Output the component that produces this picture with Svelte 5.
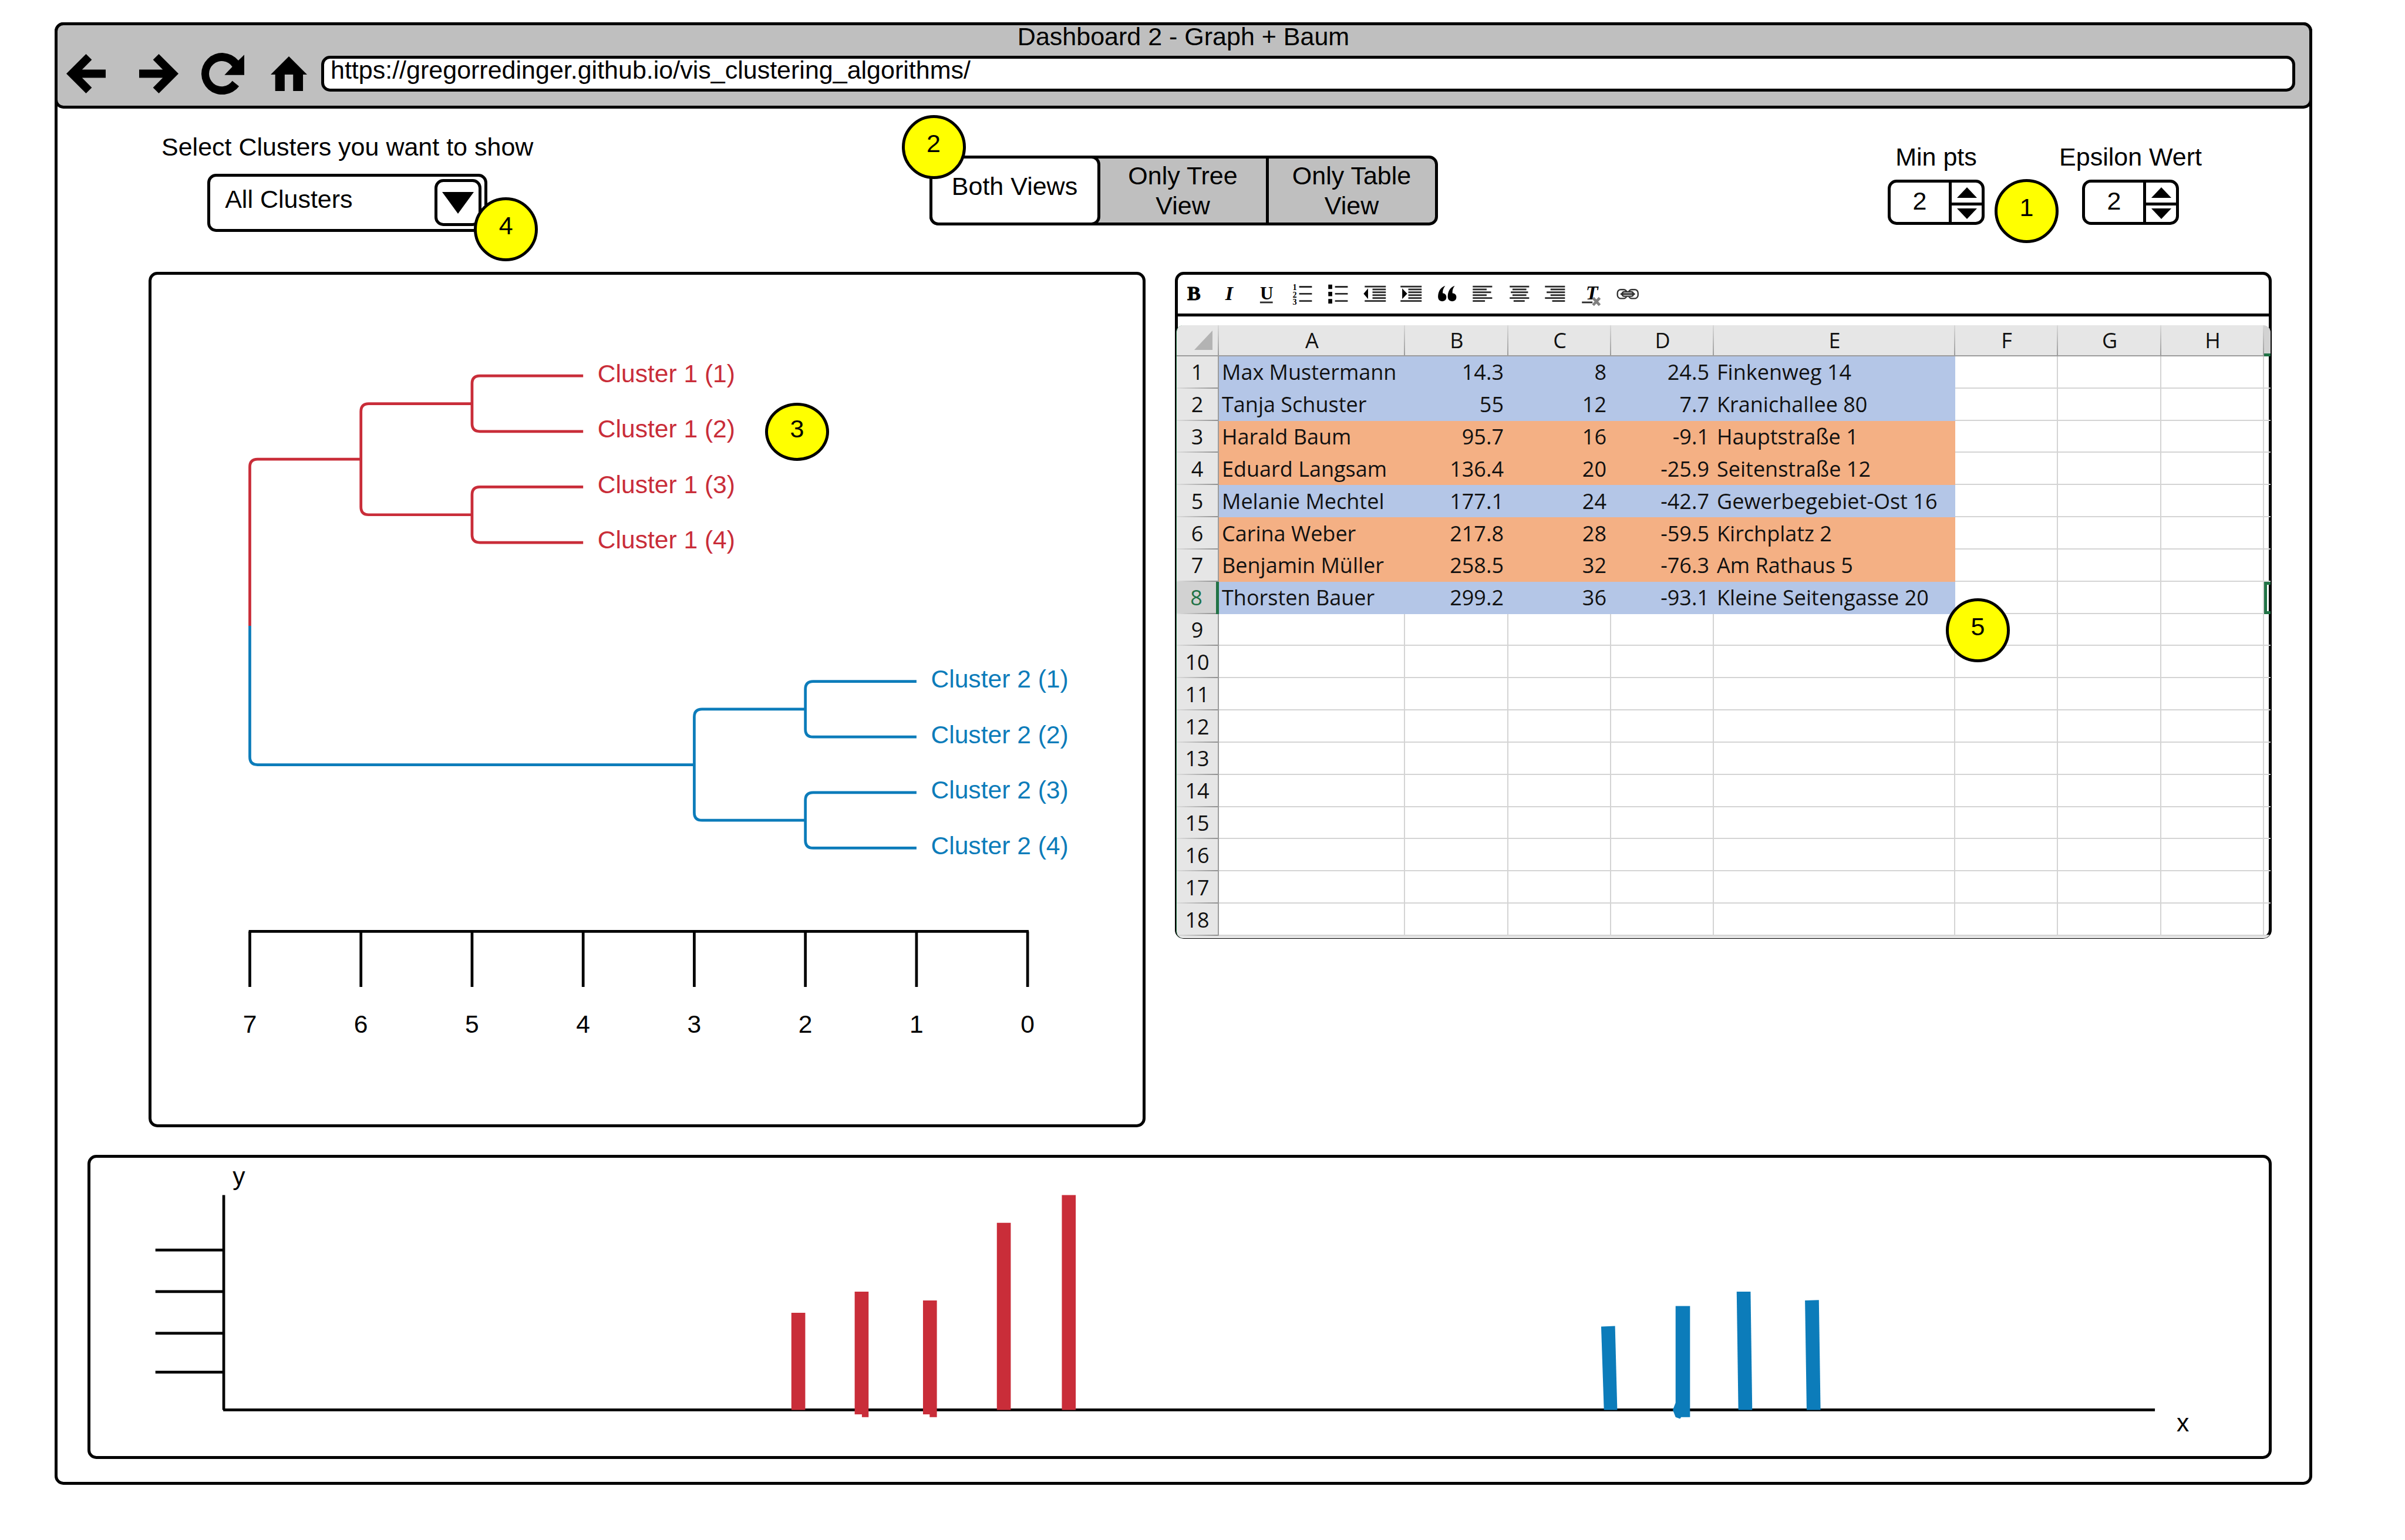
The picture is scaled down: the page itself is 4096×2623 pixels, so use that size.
<script>
  let url = $state('https://gregorredinger.github.io/vis_clustering_algorithms/');
  let selected = $state('All Clusters');
  let view = $state('Both Views');
  let minPts = $state(2);
  let epsilon = $state(2);

  const views = ['Both Views', 'Only Tree View', 'Only Table View'];

  // Dendrogram geometry: one scale unit is 200 wide, leaves are 100 apart.
  const levelX = (level) => 1850 - level * 200;
  const bracket = (level, top, bottom, endTop, endBottom) => {
    const x = levelX(level);
    return `M${endTop} ${top}H${x + 14}Q${x} ${top} ${x} ${top + 14}V${bottom - 14}Q${x} ${bottom} ${x + 14} ${bottom}H${endBottom}`;
  };
  const groups = [
    { name: 'Cluster 1', tone: 'red', top: 677, leafLevel: 5 },
    { name: 'Cluster 2', tone: 'blue', top: 1227, leafLevel: 2 }
  ];
  const ticks = [7, 6, 5, 4, 3, 2, 1, 0];

  const yTicks = [2252, 2327, 2402, 2472];
  const redBars = [
    'M1425 2365h25v175h-25z',
    'M1539 2327h25v226h-12v-5h-13z',
    'M1662 2343h25v210h-13v-5h-12z',
    'M1795 2203h25v337h-25z',
    'M1912 2153h25v387h-25z'
  ];
  const blueBars = [
    'M2883 2390l25-1 4 151h-24z',
    'M3017 2353h26v200h-16l-2 3-8-3-5-13 5-13z',
    'M3127 2327h25l3 213h-25z',
    'M3250 2343l25-1 3 198h-25z'
  ];

  const columns = ['A', 'B', 'C', 'D', 'E', 'F', 'G', 'H'];
  const people = [
    ['Max Mustermann', '14.3', '8', '24.5', 'Finkenweg 14', 'one'],
    ['Tanja Schuster', '55', '12', '7.7', 'Kranichallee 80', 'one'],
    ['Harald Baum', '95.7', '16', '-9.1', 'Hauptstraße 1', 'two'],
    ['Eduard Langsam', '136.4', '20', '-25.9', 'Seitenstraße 12', 'two'],
    ['Melanie Mechtel', '177.1', '24', '-42.7', 'Gewerbegebiet-Ost 16', 'one'],
    ['Carina Weber', '217.8', '28', '-59.5', 'Kirchplatz 2', 'two'],
    ['Benjamin Müller', '258.5', '32', '-76.3', 'Am Rathaus 5', 'two'],
    ['Thorsten Bauer', '299.2', '36', '-93.1', 'Kleine Seitengasse 20', 'one']
  ];
  const emptyRows = [9, 10, 11, 12, 13, 14, 15, 16, 17, 18];
  const lineRows = [8.5, 13.7, 18.8, 24, 29.2, 34.5];
  const tools = ['Bold', 'Italic', 'Underline', 'Numbered list', 'Bulleted list', 'Outdent', 'Indent', 'Quote', 'Align left', 'Align center', 'Align right', 'Clear formatting', 'Link'];
  const alignLines = {
    'Align left': [[14, 49], [14, 39], [14, 47], [14, 39], [14, 49], [14, 36]],
    'Align center': [[15, 50], [20, 45], [17, 48], [20, 45], [15, 50], [22, 42]],
    'Align right': [[14, 50], [24, 50], [17, 50], [24, 50], [14, 50], [27, 50]],
    Outdent: [[14, 52], [28, 52], [28, 52], [28, 52], [28, 52], [14, 52]],
    Indent: [[14, 52], [28, 52], [28, 52], [28, 52], [28, 52], [14, 52]]
  };
</script>

<div class="browser">
  <header class="chrome">
    <h1>Dashboard 2 - Graph + Baum</h1>
    <div class="navigation">
      <button class="nav back" aria-label="Back">
        <svg viewBox="0 0 70 70"><path d="M0 35L35 0 45.3 10.3 28 27.6H70V42.4H28L45.3 59.7 35 70z" /></svg>
      </button>
      <button class="nav forward" aria-label="Forward">
        <svg viewBox="0 0 70 70"><path d="M70 35L35 0 24.7 10.3 42 27.6H0V42.4H42L24.7 59.7 35 70z" /></svg>
      </button>
      <button class="nav reload" aria-label="Reload">
        <svg viewBox="0 0 77 75"><path d="M55.5 25A22.8 22.8 0 1 0 55.5 50.3L67.6 60A37.5 37.5 0 1 1 66.4 13.7L77 3.3V39.7H41.5z" /></svg>
      </button>
      <button class="nav home" aria-label="Home">
        <svg viewBox="0 0 66 63"><path d="M33 0L66 33H58.6V63H40.7V33H25.4V63H8.2V33H0z" /></svg>
      </button>
      <input class="url" type="text" aria-label="Address" bind:value={url} />
    </div>
  </header>

  <main>
    <div class="controls">
      <div class="cluster-field">
        <label for="clusters">Select Clusters you want to show</label>
        <div class="dropdown">
          <select id="clusters" bind:value={selected}>
            <option>All Clusters</option>
            <option>Cluster 1</option>
            <option>Cluster 2</option>
          </select>
          <span class="arrow"><svg viewBox="0 0 54 37"><path d="M0 0H54L27 37z" /></svg></span>
          <span class="badge on-dropdown">4</span>
        </div>
      </div>

      <div class="toggle" role="group" aria-label="View">
        {#each views as name}
          <button class="segment" class:active={view === name} onclick={() => (view = name)}>{name}</button>
        {/each}
        <span class="badge on-toggle">2</span>
      </div>

      <div class="numbers">
        <div class="number-field">
          <label for="min-pts">Min pts</label>
          <div class="spinner">
            <input id="min-pts" type="number" bind:value={minPts} />
            <div class="steps">
              <button aria-label="Increase Min pts" onclick={() => (minPts += 1)}><svg viewBox="0 0 34 18"><path d="M0 18H34L17 0z" /></svg></button>
              <button aria-label="Decrease Min pts" onclick={() => (minPts -= 1)}><svg viewBox="0 0 34 18"><path d="M0 0H34L17 18z" /></svg></button>
            </div>
            <span class="badge on-spinner">1</span>
          </div>
        </div>
        <div class="number-field">
          <label for="epsilon">Epsilon Wert</label>
          <div class="spinner">
            <input id="epsilon" type="number" bind:value={epsilon} />
            <div class="steps">
              <button aria-label="Increase Epsilon Wert" onclick={() => (epsilon += 1)}><svg viewBox="0 0 34 18"><path d="M0 18H34L17 0z" /></svg></button>
              <button aria-label="Decrease Epsilon Wert" onclick={() => (epsilon -= 1)}><svg viewBox="0 0 34 18"><path d="M0 0H34L17 18z" /></svg></button>
            </div>
          </div>
        </div>
      </div>
    </div>

    <div class="panels">
      <section class="panel tree" aria-label="Dendrogram">
        <svg class="drawing" viewBox="273 495 1784 1529">
          <path class="line red" d="M450 1127V841Q450 827 464 827H650" />
          <path class="line blue" d="M450 1127V1363Q450 1377 464 1377H1250" />
          {#each groups as group}
            {@const leafX = levelX(group.leafLevel)}
            <path class="line {group.tone}" d={bracket(group.leafLevel + 1, group.top + 50, group.top + 250, leafX, leafX)} />
            <path class="line {group.tone}" d={bracket(group.leafLevel, group.top, group.top + 100, leafX + 200, leafX + 200)} />
            <path class="line {group.tone}" d={bracket(group.leafLevel, group.top + 200, group.top + 300, leafX + 200, leafX + 200)} />
            {#each [1, 2, 3, 4] as n}
              <text class="label {group.tone}" x={leafX + 226} y={group.top + n * 100 - 89}>{group.name} ({n})</text>
            {/each}
          {/each}
          <path class="line black" d="M448 1677H1852" />
          {#each ticks as tick}
            <path class="line black" d="M{levelX(tick)} 1677V1777" />
            <text class="label centered" x={levelX(tick)} y="1859">{tick}</text>
          {/each}
        </svg>
        <span class="badge on-tree">3</span>
      </section>

      <section class="panel sheet" aria-label="Data table">
        <div class="toolbar">
          <div class="tools">
            {#each tools as tool}
              <button aria-label={tool}>
                <svg viewBox="0 0 65 45">
                  {#if tool === 'Bold'}
                    <text class="glyph heavy" x="32" y="33">B</text>
                  {:else if tool === 'Italic'}
                    <text class="glyph italic" x="30" y="33">I</text>
                  {:else if tool === 'Underline'}
                    <text class="glyph underlined" x="33" y="32">U</text>
                    <path class="rule" d="M21 37H44" />
                  {:else if tool === 'Numbered list'}
                    <text class="digit" x="18" y="15">1</text>
                    <text class="digit" x="18" y="28">2</text>
                    <text class="digit" x="18" y="41">3</text>
                    <path class="rule" d="M26 9H49M26 21.5H49M26 34.5H49" />
                  {:else if tool === 'Bulleted list'}
                    <path d="M14 5h7v8h-7zM14 18h7v8h-7zM14 31h7v8h-7z" />
                    <path class="rule" d="M26 9H49M26 21.5H49M26 34.5H49" />
                  {:else if tool === 'Quote'}
                    <path d="M29 7C20 10 16 18 16 27C16 32 19 35 23.500 35C28 35 31 32 31 27.500C31 23 28 20.500 24.500 20.500C24 15 26 11 29 7zM46 7C37 10 33.500 18 33.500 27C33.500 32 37 35 41.500 35C46 35 49 32 49 27.500C49 23 46 20.500 42 20.500C41.500 15 43 11 46 7z" />
                  {:else if tool === 'Clear formatting'}
                    <text class="glyph italic" x="33" y="32">T</text>
                    <path class="rule" d="M15 37H34" />
                    <path class="cross" d="M35 29L47 42M47 29L35 42" />
                  {:else if tool === 'Link'}
                    <rect class="chain" x="14.500" y="14" width="17" height="16" rx="6" />
                    <rect class="chain" x="34.500" y="14" width="17" height="16" rx="6" />
                    <rect class="gap" x="26" y="17" width="14" height="10" />
                    <path class="chain" d="M27 18H39Q43 18 43 22Q43 26 39 26H27Q23 26 23 22Q23 18 27 18z" />
                    <path class="rule" d="M20 22H46" />
                  {:else}
                    {#if tool === 'Outdent'}<path d="M12 21.500L20 12V31z" />{/if}
                    {#if tool === 'Indent'}<path d="M26 21.500L17 12V31z" />{/if}
                    {#each alignLines[tool] as [from, to], i}
                      <path class="rule" d="M{from} {lineRows[i]}H{to}" />
                    {/each}
                  {/if}
                </svg>
              </button>
            {/each}
          </div>
        </div>
        <div class="grid-clip">
          <table>
            <colgroup>
              <col class="c-index" /><col class="c-name" /><col class="c-odd" /><col class="c-std" /><col class="c-std" />
              <col /><col class="c-std" /><col class="c-odd" /><col class="c-std" /><col class="c-rest" />
            </colgroup>
            <thead>
              <tr>
                <th class="corner" aria-label="Select all"><svg viewBox="0 0 31 33"><path d="M31 0V33H0z" /></svg></th>
                {#each columns as column}<th scope="col">{column}</th>{/each}
                <th class="current" aria-label="I"></th>
              </tr>
            </thead>
            <tbody>
              {#each people as [name, b, c, d, street, tone], i}
                <tr class={tone}>
                  <th scope="row" class:chosen={i === 7}>{i + 1}</th>
                  <td class="filled">{name}</td>
                  <td class="filled figure">{b}</td>
                  <td class="filled figure">{c}</td>
                  <td class="filled figure">{d}</td>
                  <td class="filled">{street}</td>
                  <td></td><td></td><td></td>
                  <td class:cursor={i === 7}></td>
                </tr>
              {/each}
              {#each emptyRows as n}
                <tr>
                  <th scope="row">{n}</th>
                  <td></td><td></td><td></td><td></td><td></td><td></td><td></td><td></td><td></td>
                </tr>
              {/each}
            </tbody>
          </table>
        </div>
        <span class="badge on-sheet">5</span>
      </section>
    </div>

    <section class="panel chart" aria-label="Bar chart">
      <svg class="drawing" viewBox="163 2086 3922 537">
        <path class="line black" d="M403 2153V2540M402 2540H3880" />
        {#each yTicks as y}<path class="line black" d="M280 {y}H403" />{/each}
        {#each redBars as d}<path class="fill-red" {d} />{/each}
        {#each blueBars as d}<path class="fill-blue" {d} />{/each}
        <text class="label" x="419" y="2135">y</text>
        <text class="label" x="3919" y="2579">x</text>
      </svg>
    </section>
  </main>
</div>

<style>
  :global(body) {
    margin: 0;
    background: #fff;
  }

  .browser {
    margin: 38px 158px 93px 93px;
    border: 5px solid #000;
    border-radius: 15px;
    font: 43px/51px "Liberation Sans", Arial, sans-serif;
    color: #000;
  }

  button,
  input,
  select {
    box-sizing: border-box;
    margin: 0;
    padding: 0;
    border: 0;
    background: none;
    font: inherit;
    color: inherit;
  }

  svg {
    display: block;
  }

  .chrome {
    margin: -5px -5px 0;
    padding: 0 24px 24px 15px;
    border: 5px solid #000;
    border-radius: 15px;
    background: #bfbfbf;
  }

  h1 {
    margin: 0 0 13px;
    padding-left: 9px;
    font: inherit;
    line-height: 39px;
    text-align: center;
  }

  .navigation {
    display: flex;
    align-items: center;
    height: 61px;
  }

  .nav svg {
    width: 100%;
  }

  .back,
  .forward {
    width: 67px;
  }

  .forward {
    margin-left: 57px;
  }

  .reload {
    width: 73px;
    margin-left: 39px;
  }

  .home {
    width: 62px;
    margin: 0 24px 0 45px;
  }

  .url {
    flex: 1;
    height: 61px;
    padding: 0 11px 13px;
    border: 5px solid #000;
    border-radius: 15px;
    background: #fff;
  }

  main {
    padding: 40px 64px 39px 51px;
  }

  .controls {
    display: grid;
    grid-template-columns: 1fr auto 1fr;
    align-items: start;
    margin: 0 -64px 0 -51px;
  }

  .cluster-field {
    display: flex;
    flex-direction: column;
    align-items: center;
    gap: 20px;
    justify-self: start;
    margin-left: 177px;
  }

  .dropdown {
    position: relative;
    width: 477px;
    height: 99px;
  }

  select {
    appearance: none;
    width: 100%;
    height: 100%;
    padding: 0 100px 12px 25px;
    border: 5px solid #000;
    border-radius: 15px;
    background: #fff;
  }

  .arrow {
    position: absolute;
    top: 9px;
    right: 10px;
    display: grid;
    place-items: center;
    box-sizing: border-box;
    width: 80px;
    height: 80px;
    border: 5px solid #000;
    border-radius: 15px;
    pointer-events: none;
  }

  .arrow svg {
    width: 54px;
  }

  .badge {
    position: absolute;
    display: grid;
    place-items: center;
    box-sizing: border-box;
    width: 109px;
    height: 109px;
    padding-bottom: 12px;
    border: 5px solid #000;
    border-radius: 50%;
    background: #ff0;
  }

  .on-dropdown {
    left: 454px;
    top: 40px;
  }

  .on-toggle {
    left: -52px;
    top: -74px;
  }

  .on-spinner {
    left: 177px;
    top: -6px;
  }

  .on-tree {
    left: 1045px;
    top: 218px;
    height: 99px;
    padding-bottom: 10px;
  }

  .on-sheet {
    left: 1308px;
    top: 551px;
  }

  .toggle {
    position: relative;
    display: grid;
    grid-template-columns: 286fr 282fr 288fr;
    box-sizing: border-box;
    width: 866px;
    height: 119px;
    margin-top: 40px;
    border: 5px solid #000;
    border-radius: 15px;
    background: #bfbfbf;
  }

  .segment {
    padding: 0 30px;
  }

  .segment + .segment:not(.active) + .segment:not(.active) {
    border-left: 5px solid #000;
  }

  .segment.active {
    margin: -5px 0 -5px -5px;
    padding-bottom: 14px;
    border: 5px solid #000;
    border-radius: 15px;
    background: #fff;
  }

  .numbers {
    display: flex;
    gap: 127px;
    justify-self: end;
    margin: 17px 183px 0 0;
  }

  .number-field {
    display: flex;
    flex-direction: column;
    align-items: center;
    gap: 13px;
  }

  .spinner {
    position: relative;
    display: flex;
    box-sizing: border-box;
    width: 165px;
    height: 77px;
    border: 5px solid #000;
    border-radius: 15px;
  }

  .spinner input {
    appearance: textfield;
    width: 99px;
    padding-bottom: 5px;
    text-align: center;
  }

  .spinner input::-webkit-inner-spin-button {
    display: none;
  }

  .steps {
    display: grid;
    flex: 1;
    grid-template-rows: 1fr 1fr;
    border-left: 5px solid #000;
  }

  .steps button {
    display: grid;
    place-items: center;
    line-height: 0;
  }

  .steps button + button {
    border-top: 5px solid #000;
  }

  .steps svg {
    width: 34px;
  }

  .panels {
    display: grid;
    grid-template-columns: 1698fr 1868fr;
    gap: 50px;
    align-items: start;
    margin: 68px 0 47px 104px;
  }

  .panel {
    position: relative;
    border: 5px solid #000;
    border-radius: 15px;
  }

  .drawing {
    width: 100%;
  }

  .line {
    fill: none;
    stroke-width: 5;
  }

  .line.red {
    stroke: #c92d39;
  }

  .line.blue {
    stroke: #0c7cba;
  }

  .line.black {
    stroke: #000;
  }

  .label {
    font-size: 45px;
  }

  .label.red,
  .fill-red {
    fill: #c92d39;
  }

  .label.blue,
  .fill-blue {
    fill: #0c7cba;
  }

  .centered {
    text-anchor: middle;
  }

  .toolbar {
    margin: 0 -3px;
    border-bottom: 5px solid #000;
  }

  .tools {
    display: grid;
    grid-template-columns: repeat(13, 1fr);
    align-items: center;
    width: 800px;
    height: 66px;
  }

  .tools svg {
    width: 100%;
  }

  .glyph,
  .digit {
    font-family: "Liberation Serif", "Times New Roman", serif;
    font-weight: bold;
    font-size: 36px;
    text-anchor: middle;
  }

  .digit {
    font-size: 15px;
  }

  .glyph.heavy {
    stroke: #000;
    stroke-width: 1;
  }

  .glyph.italic {
    font-style: italic;
  }

  .glyph.underlined {
    font-size: 33px;
  }

  .rule {
    fill: none;
    stroke: #2b2b2b;
    stroke-width: 3;
  }

  .cross {
    fill: none;
    stroke: #808080;
    stroke-width: 5;
  }

  .chain {
    fill: none;
    stroke: #333;
    stroke-width: 2.5;
  }

  .gap {
    fill: #fff;
  }

  .grid-clip {
    margin: 15px -3px -4px;
    border-left: 1px solid #217346;
    border-radius: 12px;
    overflow: hidden;
  }

  table {
    table-layout: fixed;
    width: 100%;
    height: 1044px;
    border-spacing: 0;
    border-bottom: 4px solid #e6e6e6;
    font: 36px/40px "Open Sans", "Noto Sans", sans-serif;
    color: #111;
  }

  .c-index {
    width: 72px;
  }

  .c-name {
    width: 317px;
  }

  .c-std {
    width: 175px;
  }

  .c-odd {
    width: 176px;
  }

  .c-rest {
    width: 11px;
  }

  th,
  td {
    box-sizing: border-box;
    padding: 0;
    white-space: nowrap;
  }

  th {
    font-weight: normal;
    text-align: center;
  }

  thead th {
    height: 53px;
    border-bottom: 2px solid #9c9c9c;
    background: linear-gradient(#d8d8d8, #9c9c9c) right / 2px 100% no-repeat, #e6e6e6;
  }

  thead .current {
    border-bottom: 5px solid #217346;
    background: #d2d2d2;
  }

  .corner svg {
    width: 31px;
    margin-left: 30px;
    fill: #b3b3b3;
  }

  tbody th {
    height: 42px;
    border-right: 2px solid #9c9c9c;
    background: linear-gradient(to right, #dcdcdc, #909090) bottom / 100% 2px no-repeat, #e6e6e6;
  }

  tbody th.chosen {
    border-right: 5px solid #217346;
    background-color: #d2d2d2;
    color: #217346;
  }

  td {
    border-right: 2px solid #d4d4d4;
    border-bottom: 2px solid #d4d4d4;
  }

  td.filled {
    padding: 0 8px 0 5px;
    border: 0;
  }

  .figure {
    text-align: right;
  }

  .one .filled {
    background: #b4c6e7;
  }

  .two .filled {
    background: #f4b084;
  }

  td:last-child {
    border-right: 0;
  }

  td.cursor {
    border: 5px solid #217346;
    border-right: 0;
  }
</style>
